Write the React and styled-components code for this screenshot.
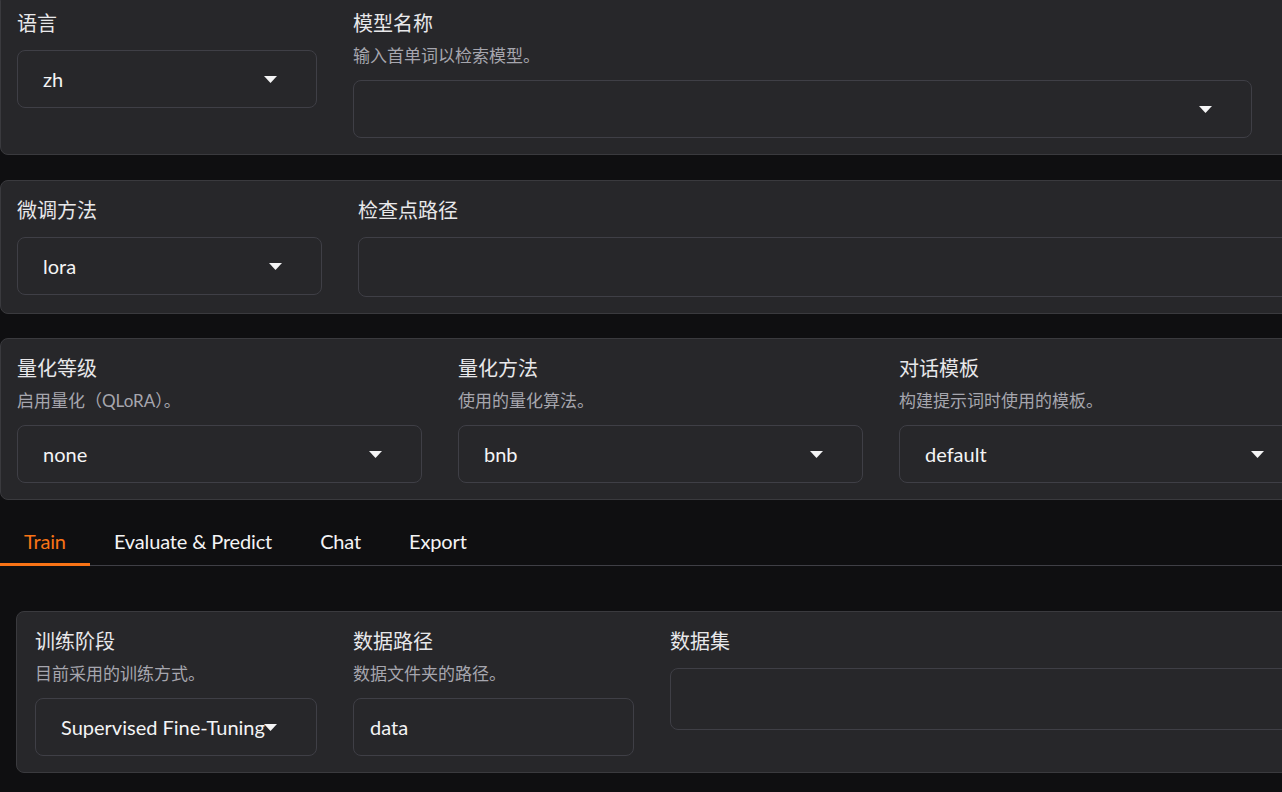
import React from "react";
import styled, { createGlobalStyle } from "styled-components";

const GlobalStyle = createGlobalStyle`
  html, body {
    margin: 0;
    padding: 0;
    background: #0f0f11;
    overflow: hidden;
  }
  body {
    font-family: "Lato", "Noto Sans CJK SC", sans-serif;
    color: #e4e4e7;
  }
  * { box-sizing: border-box; }
`;

const Page = styled.div`
  width: 1340px;
  margin-top: -7px;
  display: flex;
  flex-direction: column;
`;

const Panel = styled.div`
  display: flex;
  gap: 36px;
  background: #27272a;
  border: 1px solid #3a3a3e;
  border-radius: 8px;
  padding: ${(p) => p.$pad || "16px"};
  margin-bottom: ${(p) => p.$mb ?? 25}px;
`;

const Field = styled.div`
  width: ${(p) => p.$w}px;
  flex-shrink: 0;
  display: flex;
  flex-direction: column;
`;

const Label = styled.div`
  font-size: 20px;
  line-height: 26px;
  color: #e8e8ea;
  font-family: "Lato", "Noto Sans CJK SC", sans-serif;
`;

const Info = styled.div`
  margin-top: 9px;
  margin-bottom: -1px;
  font-size: 17px;
  line-height: 22px;
  color: #a6a6ae;
  font-family: "Lato", "Noto Sans CJK SC", sans-serif;
`;

const Box = styled.div`
  margin-top: 14px;
  height: ${(p) => p.$h || 58}px;
  border: 1px solid #3f3f46;
  border-radius: 8px;
  background: #27272a;
  display: flex;
  align-items: center;
  padding: ${(p) => (p.$select ? "0 39px 0 25px" : "0 16px")};
  font-size: 20px;
  color: #f4f4f5;
`;

const Value = styled.span`
  flex: 1;
  min-width: 0;
  white-space: nowrap;
  overflow: visible;
`;

const Caret = styled.svg`
  flex-shrink: 0;
  width: 13px;
  height: 7px;
`;

const Spacer = styled.div`
  height: ${(p) => p.$h}px;
`;

const TabBar = styled.div`
  display: flex;
  border-bottom: 1px solid #3f3f46;
`;

const Tab = styled.div`
  height: 47px;
  padding: 3px 24px 3px;
  margin-bottom: -1px;
  display: flex;
  align-items: center;
  font-size: 20px;
  letter-spacing: -0.15px;
  color: ${(p) => (p.$active ? "#f97316" : "#f4f4f5")};
  border-bottom: 3px solid ${(p) => (p.$active ? "#f97316" : "transparent")};
`;

const TabContent = styled.div`
  padding: 45px 0 0 16px;
`;

const Dropdown = ({ value }) => (
  <Box $select>
    <Value>{value}</Value>
    <Caret viewBox="0 0 13 7">
      <path d="M0 0 L13 0 L6.5 7 Z" fill="#f4f4f5" />
    </Caret>
  </Box>
);

export default function App() {
  return (
    <>
      <GlobalStyle />
      <Page>
        <Panel>
          <Field $w={300}>
            <Label>语言</Label>
            <Dropdown value="zh" />
          </Field>
          <Field $w={899}>
            <Label>模型名称</Label>
            <Info>输入首单词以检索模型。</Info>
            <Dropdown value="" />
          </Field>
        </Panel>

        <Panel $mb={24}>
          <Field $w={305}>
            <Label>微调方法</Label>
            <Dropdown value="lora" />
          </Field>
          <Field $w={980}>
            <Label>检查点路径</Label>
            <Box $h={60} />
          </Field>
        </Panel>

        <Panel $mb={0}>
          <Field $w={405}>
            <Label>量化等级</Label>
            <Info>启用量化（QLoRA）。</Info>
            <Dropdown value="none" />
          </Field>
          <Field $w={405}>
            <Label>量化方法</Label>
            <Info>使用的量化算法。</Info>
            <Dropdown value="bnb" />
          </Field>
          <Field $w={405}>
            <Label>对话模板</Label>
            <Info>构建提示词时使用的模板。</Info>
            <Dropdown value="default" />
          </Field>
        </Panel>

        <Spacer $h={19} />

        <TabBar>
          <Tab $active>Train</Tab>
          <Tab>Evaluate &amp; Predict</Tab>
          <Tab>Chat</Tab>
          <Tab>Export</Tab>
        </TabBar>

        <TabContent>
          <Panel $pad="16px 16px 16px 18px" $mb={0}>
            <Field $w={282}>
              <Label>训练阶段</Label>
              <Info>目前采用的训练方式。</Info>
              <Dropdown value="Supervised Fine-Tuning" />
            </Field>
            <Field $w={281}>
              <Label>数据路径</Label>
              <Info>数据文件夹的路径。</Info>
              <Box>data</Box>
            </Field>
            <Field $w={700}>
              <Label>数据集</Label>
              <Box $h={62} />
            </Field>
          </Panel>
        </TabContent>
      </Page>
    </>
  );
}
